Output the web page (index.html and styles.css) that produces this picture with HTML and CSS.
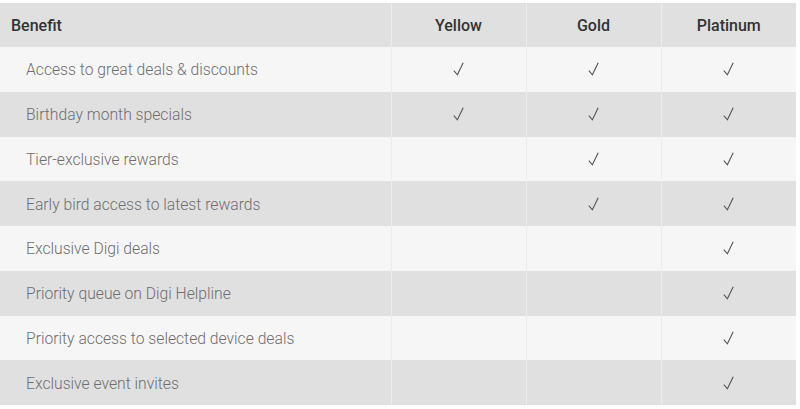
FILE: index.html
```html
<!DOCTYPE html>
<html>
<head>
<meta charset="utf-8">
<link rel="stylesheet" href="styles.css">
</head>
<body>
<div class="wrap">
<table class="tiers">
  <colgroup>
    <col class="c-benefit"><col class="c-tier"><col class="c-tier"><col class="c-tier">
  </colgroup>
  <thead>
    <tr><th class="benefit">Benefit</th><th>Yellow</th><th>Gold</th><th>Platinum</th></tr>
  </thead>
  <tbody>
    <tr><td class="benefit">Access to great deals &amp; discounts</td><td><svg class="check" viewBox="0 0 11 14"><polyline points="0.8,8.6 4.4,12.8 10.2,0.8"/></svg></td><td><svg class="check" viewBox="0 0 11 14"><polyline points="0.8,8.6 4.4,12.8 10.2,0.8"/></svg></td><td><svg class="check" viewBox="0 0 11 14"><polyline points="0.8,8.6 4.4,12.8 10.2,0.8"/></svg></td></tr>
    <tr><td class="benefit">Birthday month specials</td><td><svg class="check" viewBox="0 0 11 14"><polyline points="0.8,8.6 4.4,12.8 10.2,0.8"/></svg></td><td><svg class="check" viewBox="0 0 11 14"><polyline points="0.8,8.6 4.4,12.8 10.2,0.8"/></svg></td><td><svg class="check" viewBox="0 0 11 14"><polyline points="0.8,8.6 4.4,12.8 10.2,0.8"/></svg></td></tr>
    <tr><td class="benefit">Tier-exclusive rewards</td><td></td><td><svg class="check" viewBox="0 0 11 14"><polyline points="0.8,8.6 4.4,12.8 10.2,0.8"/></svg></td><td><svg class="check" viewBox="0 0 11 14"><polyline points="0.8,8.6 4.4,12.8 10.2,0.8"/></svg></td></tr>
    <tr><td class="benefit">Early bird access to latest rewards</td><td></td><td><svg class="check" viewBox="0 0 11 14"><polyline points="0.8,8.6 4.4,12.8 10.2,0.8"/></svg></td><td><svg class="check" viewBox="0 0 11 14"><polyline points="0.8,8.6 4.4,12.8 10.2,0.8"/></svg></td></tr>
    <tr><td class="benefit">Exclusive Digi deals</td><td></td><td></td><td><svg class="check" viewBox="0 0 11 14"><polyline points="0.8,8.6 4.4,12.8 10.2,0.8"/></svg></td></tr>
    <tr><td class="benefit">Priority queue on Digi Helpline</td><td></td><td></td><td><svg class="check" viewBox="0 0 11 14"><polyline points="0.8,8.6 4.4,12.8 10.2,0.8"/></svg></td></tr>
    <tr><td class="benefit">Priority access to selected device deals</td><td></td><td></td><td><svg class="check" viewBox="0 0 11 14"><polyline points="0.8,8.6 4.4,12.8 10.2,0.8"/></svg></td></tr>
    <tr><td class="benefit">Exclusive event invites</td><td></td><td></td><td><svg class="check" viewBox="0 0 11 14"><polyline points="0.8,8.6 4.4,12.8 10.2,0.8"/></svg></td></tr>
  </tbody>
</table>
</div>
</body>
</html>
```
FILE: styles.css
```css
html, body {
  margin: 0;
  padding: 0;
  background: #ffffff;
}
.wrap {
  padding-top: 3px;
  width: 796px;
}
.tiers {
  width: 796px;
  border-collapse: collapse;
  table-layout: fixed;
  font-family: Roboto, "Liberation Sans", sans-serif;
}
.c-benefit {
  width: 391px;
}
.c-tier {
  width: 135px;
}
.tiers th, .tiers td {
  padding: 0;
  text-align: center;
  vertical-align: middle;
  border-left: 1px solid #ececec;
}
.tiers th:first-child, .tiers td:first-child {
  border-left: none;
  text-align: left;
}
.tiers thead tr {
  background: #e0e0e0;
  height: 44px;
}
.tiers th {
  font-size: 16px;
  font-weight: 500;
  color: #333333;
}
.tiers th.benefit {
  padding-left: 11px;
}
.tiers tbody tr {
  height: 44.75px;
}
.tiers tbody tr:nth-child(odd) {
  background: #f7f6f7;
}
.tiers tbody tr:nth-child(even) {
  background: #e0e0e0;
}
.tiers td {
  font-size: 15.7px;
  font-weight: 300;
  color: #6e6e6e;
  line-height: 20px;
}
.tiers td.benefit {
  padding-left: 26px;
  padding-top: 2px;
}
.check {
  display: block;
  margin: 0 auto;
  width: 11px;
  height: 14px;
  fill: none;
  stroke: #555555;
  stroke-width: 1.1;
  stroke-linejoin: miter;
}
```
